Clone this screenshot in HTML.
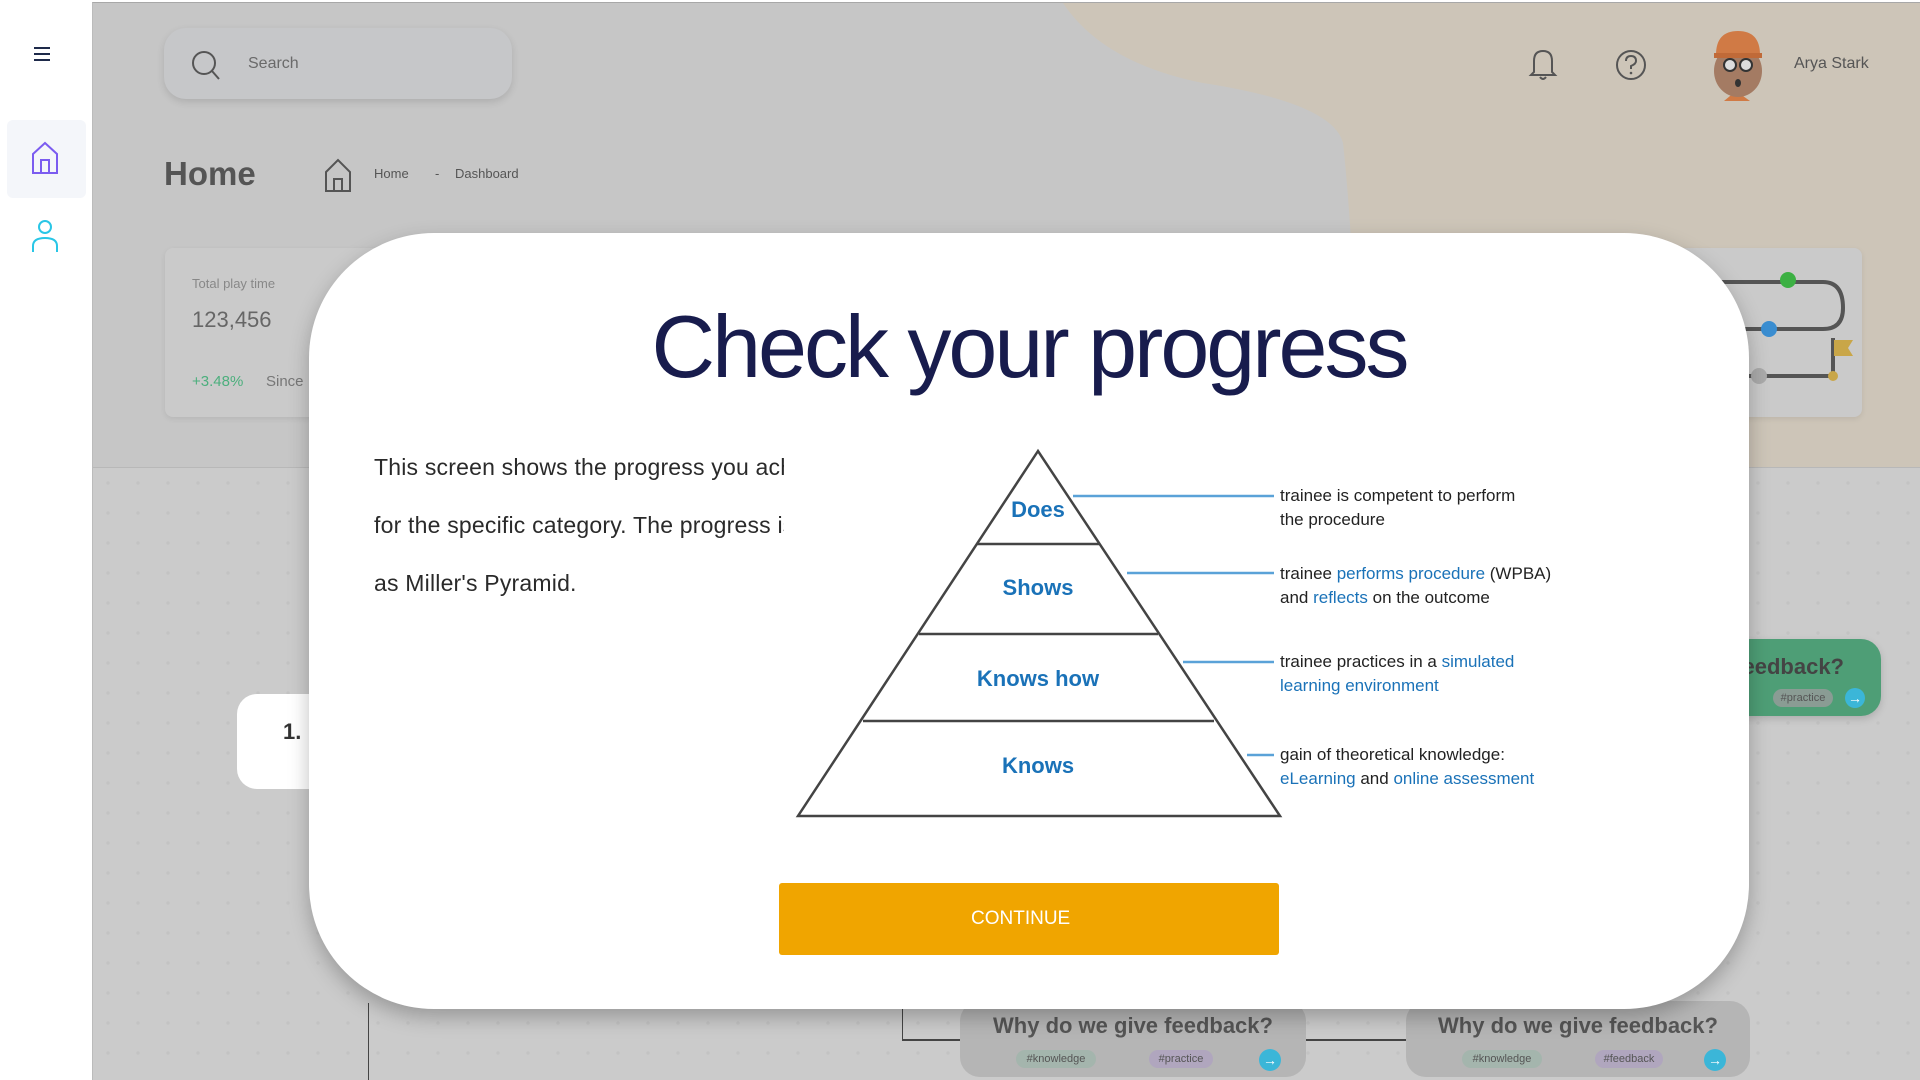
<!DOCTYPE html>
<html><head><meta charset="utf-8"><style>
*{margin:0;padding:0;box-sizing:border-box}
body{width:1920px;height:1080px;overflow:hidden;position:relative;font-family:"Liberation Sans",sans-serif;background:#fff}
.abs{position:absolute}
#main{left:92px;top:2px;width:1828px;height:1078px;background:#c6c6c6;overflow:hidden;border-top:1px solid #a8a8a8;border-left:1px solid #bbb}
.dots{background-color:#cbcbcb;background-image:radial-gradient(#c3c3c3 1.5px,transparent 2px);background-size:30px 30px}
.t{position:absolute;white-space:nowrap}
</style></head><body>
<!-- sidebar -->
<div class="abs" style="left:34px;top:47px;width:16px;height:14px;border-top:2px solid #1e2a4a;border-bottom:2px solid #1e2a4a"><div style="margin-top:4px;height:2px;background:#1e2a4a"></div></div>
<div class="abs" style="left:7px;top:120px;width:79px;height:78px;background:#f4f6fa;border-radius:6px"></div>
<svg class="abs" style="left:30px;top:140px" width="30" height="36" viewBox="0 0 30 36"><path d="M3 14 L15 3 L27 14 V33 H3 Z M11 33 V20 H19 V33" fill="none" stroke="#7b5cf0" stroke-width="2"/></svg>
<svg class="abs" style="left:31px;top:218px" width="30" height="36" viewBox="0 0 30 36"><circle cx="14" cy="9" r="6" fill="none" stroke="#29c6e6" stroke-width="2"/><path d="M2 34 V28 Q2 20 14 20 Q26 20 26 28 V34" fill="none" stroke="#29c6e6" stroke-width="2"/></svg>

<div id="main" class="abs">
  <svg class="abs" style="left:0;top:0" width="1828" height="470"><path d="M970 0 Q1010 60 1110 80 Q1240 100 1250 140 Q1260 230 1270 470 L1828 470 L1828 0 Z" fill="#cdc5b8"/></svg>
  <div class="abs dots" style="left:0;top:464px;width:1828px;height:620px;border-top:1px solid #b8b8b8"></div>
  <!-- search -->
  <div class="abs" style="left:71px;top:25px;width:348px;height:71px;background:#c6c7c9;border-radius:22px;box-shadow:0 3px 8px rgba(0,0,0,.12)"></div>
  <svg class="abs" style="left:97px;top:46px" width="34" height="34"><circle cx="14" cy="14" r="11" fill="none" stroke="#555" stroke-width="2"/><path d="M22 22 L29 30" stroke="#555" stroke-width="2"/></svg>
  <div class="t" style="left:155px;top:52px;font-size:16px;color:#6a6a6a">Search</div>
  <div class="t" style="left:71px;top:152px;font-size:33px;font-weight:bold;color:#555">Home</div>
  <svg class="abs" style="left:231px;top:155px" width="30" height="36"><path d="M2 14 L14 2 L26 14 V33 H2 Z M10 33 V21 H18 V33" fill="none" stroke="#555" stroke-width="2"/></svg>
  <div class="t" style="left:281px;top:163px;font-size:13px;color:#555">Home</div>
  <div class="t" style="left:342px;top:163px;font-size:13px;color:#555">-</div>
  <div class="t" style="left:362px;top:163px;font-size:13px;color:#555">Dashboard</div>
  <!-- top right -->
  <svg class="abs" style="left:1435px;top:44px" width="30" height="34"><path d="M6 25 V14 Q6 4 15 4 Q24 4 24 14 V25 L27 28 H3 Z M12 30 Q15 34 18 30" fill="none" stroke="#555" stroke-width="2"/></svg>
  <svg class="abs" style="left:1521px;top:45px" width="34" height="34"><circle cx="17" cy="17" r="14" fill="none" stroke="#555" stroke-width="2"/><path d="M12 13 Q12 8 17 8 Q22 8 22 13 Q22 16 17 18 V21" fill="none" stroke="#555" stroke-width="2"/><circle cx="17" cy="25" r="1.3" fill="#555"/></svg>
  <svg class="abs" style="left:1613px;top:24px" width="64" height="74"><path d="M18 74 L30 64 L44 74 Z" fill="#d07a45"/><ellipse cx="32" cy="44" rx="24" ry="26" fill="#a47b63"/><path d="M10 28 Q10 4 32 4 Q54 4 54 28 Z" fill="#d07a45"/><rect x="8" y="26" width="48" height="5" fill="#c06a38"/><circle cx="24" cy="38" r="6" fill="#ddd" stroke="#333" stroke-width="2"/><circle cx="40" cy="38" r="6" fill="#ddd" stroke="#333" stroke-width="2"/><ellipse cx="32" cy="56" rx="3" ry="4" fill="#333"/></svg>
  <div class="t" style="left:1701px;top:52px;font-size:16px;color:#555">Arya Stark</div>
  <!-- stat card -->
  <div class="abs" style="left:72px;top:245px;width:1697px;height:169px;background:#cacaca;border-radius:8px;box-shadow:0 2px 6px rgba(0,0,0,.08)"></div>
  <div class="t" style="left:99px;top:273px;font-size:13px;color:#888">Total play time</div>
  <div class="t" style="left:99px;top:304px;font-size:22px;color:#666">123,456</div>
  <div class="t" style="left:99px;top:370px;font-size:15px;color:#4caf7d">+3.48%</div>
  <div class="t" style="left:173px;top:370px;font-size:15px;color:#777">Since</div>
  <svg class="abs" style="left:1600px;top:255px" width="170" height="140"><path d="M20 24 H130 Q150 24 150 50 Q150 71 130 71 H40" fill="none" stroke="#555" stroke-width="4"/><path d="M45 118 H140 V80" fill="none" stroke="#555" stroke-width="4"/><circle cx="95" cy="22" r="8" fill="#3cb043"/><circle cx="76" cy="71" r="8" fill="#3a8dd0"/><circle cx="66" cy="118" r="8" fill="#aaa"/><circle cx="140" cy="118" r="5" fill="#c9a648"/><path d="M141 82 H160 L155 90 L160 98 H141 Z" fill="#c9a648"/></svg>
  <!-- cards -->
  <div class="abs" style="left:144px;top:691px;width:120px;height:95px;background:#fff;border-radius:20px"></div>
  <div class="t" style="left:190px;top:716px;font-size:22px;font-weight:bold;color:#333">1.</div>
  <div class="abs" style="left:1560px;top:636px;width:228px;height:77px;background:#4e9e76;border-radius:20px;box-shadow:0 3px 8px rgba(0,0,0,.15);overflow:hidden">
    <div class="t" style="right:37px;top:15px;font-size:22px;font-weight:bold;color:#444">Why do we give feedback?</div>
  </div>
  <div class="abs" style="left:1680px;top:686px;width:60px;height:18px;border-radius:9px;background:#8a9c94;font-size:11px;color:#555;text-align:center;line-height:18px">#practice</div>
  <div class="abs" style="left:1752px;top:685px;width:20px;height:20px;border-radius:50%;background:#3bb6d8;color:#fff;font-size:14px;text-align:center;line-height:20px">→</div>
  <div class="abs" style="left:275px;top:1000px;width:1px;height:80px;background:#444"></div>
  <div class="abs" style="left:809px;top:1000px;width:1px;height:37px;background:#444"></div>
  <div class="abs" style="left:809px;top:1036px;width:58px;height:2px;background:#444"></div>
  <div class="abs" style="left:1213px;top:1036px;width:100px;height:2px;background:#444"></div>
  <div class="abs" style="left:867px;top:998px;width:346px;height:76px;background:#b5b5b5;border-radius:20px"></div>
  <div class="abs" style="left:1313px;top:998px;width:344px;height:76px;background:#b5b5b5;border-radius:20px"></div>
  <div class="t" style="left:867px;top:1010px;width:346px;text-align:center;font-size:22px;font-weight:bold;color:#555">Why do we give feedback?</div>
  <div class="t" style="left:1313px;top:1010px;width:344px;text-align:center;font-size:22px;font-weight:bold;color:#555">Why do we give feedback?</div>
  <div class="abs" style="left:923px;top:1047px;width:80px;height:18px;border-radius:9px;background:#a4b5ad;font-size:11px;color:#555;text-align:center;line-height:18px">#knowledge</div>
  <div class="abs" style="left:1056px;top:1047px;width:64px;height:18px;border-radius:9px;background:#b0a6be;font-size:11px;color:#555;text-align:center;line-height:18px">#practice</div>
  <div class="abs" style="left:1166px;top:1046px;width:22px;height:22px;border-radius:50%;background:#3bb6d8;color:#fff;font-size:14px;text-align:center;line-height:22px">→</div>
  <div class="abs" style="left:1369px;top:1047px;width:80px;height:18px;border-radius:9px;background:#a4b5ad;font-size:11px;color:#555;text-align:center;line-height:18px">#knowledge</div>
  <div class="abs" style="left:1502px;top:1047px;width:68px;height:18px;border-radius:9px;background:#b0a6be;font-size:11px;color:#555;text-align:center;line-height:18px">#feedback</div>
  <div class="abs" style="left:1611px;top:1046px;width:22px;height:22px;border-radius:50%;background:#3bb6d8;color:#fff;font-size:14px;text-align:center;line-height:22px">→</div>
</div>

<!-- modal -->
<div class="abs" style="left:309px;top:233px;width:1440px;height:776px;background:#fff;border-radius:125px;box-shadow:0 8px 20px rgba(0,0,0,.25)"></div>
<div class="t" style="left:309px;top:296px;width:1440px;text-align:center;font-size:88px;color:#181c4d;letter-spacing:-3px">Check your progress</div>
<div class="abs" style="left:374px;top:438px;width:410px;overflow:hidden;font-size:23px;line-height:58px;color:#2a2a2a;white-space:nowrap;letter-spacing:0.2px">This screen shows the progress you achieved<br>for the specific category. The progress is shown<br>as Miller's Pyramid.</div>
<svg class="abs" style="left:790px;top:445px" width="800" height="380">
<g fill="none" stroke="#444" stroke-width="2.5"><path d="M248 6 L8 371 H490 Z"/><path d="M187 99 H309 M129 189 H368 M73 276 H424"/></g>
<g stroke="#5aa2d8" stroke-width="2.5"><path d="M283 51 H484 M337 128 H484 M393 217 H484 M457 310 H484"/></g>
<g font-family="Liberation Sans,sans-serif" font-weight="bold" font-size="22" fill="#1a72b8" text-anchor="middle"><text x="248" y="72">Does</text><text x="248" y="150">Shows</text><text x="248" y="241">Knows how</text><text x="248" y="328">Knows</text></g>
<g font-family="Liberation Sans,sans-serif" font-size="17" fill="#222"><text x="490" y="56">trainee is competent to perform</text><text x="490" y="80">the procedure</text>
<text x="490" y="134">trainee <tspan fill="#1a72b8">performs procedure</tspan> (WPBA)</text><text x="490" y="158">and <tspan fill="#1a72b8">reflects</tspan> on the outcome</text>
<text x="490" y="222">trainee practices in a <tspan fill="#1a72b8">simulated</tspan></text><text x="490" y="246" fill="#1a72b8">learning environment</text>
<text x="490" y="315">gain of theoretical knowledge:</text><text x="490" y="339"><tspan fill="#1a72b8">eLearning</tspan> and <tspan fill="#1a72b8">online assessment</tspan></text></g>
</svg>
<div class="abs" style="left:779px;top:883px;width:500px;height:72px;background:#f0a500;border-radius:3px;color:#fff;font-size:19px;line-height:72px;padding-left:192px">CONTINUE</div>
</body></html>
